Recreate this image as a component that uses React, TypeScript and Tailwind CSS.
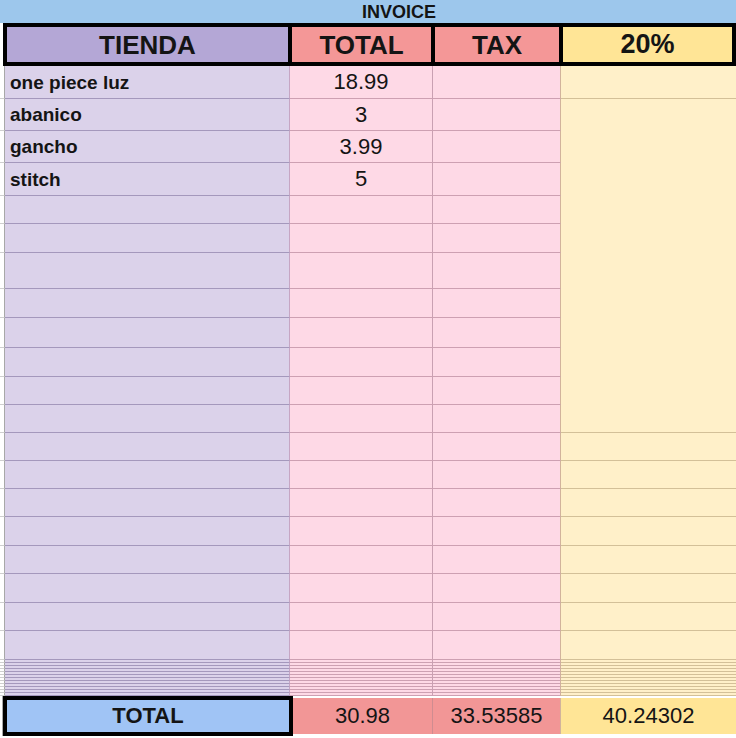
const rowHeights = [33, 32, 32, 33, 28, 29, 36, 29, 30, 29, 28, 28, 28, 28, 28, 29, 28, 29, 28, 29];

const items = [
  { name: 'one piece luz', total: '18.99' },
  { name: 'abanico', total: '3' },
  { name: 'gancho', total: '3.99' },
  { name: 'stitch', total: '5' },
];

const thinRows = Array.from({ length: 12 }, (_, i) => i);

export default function App() {
  return (
    <div className="w-[736px] h-[738px] overflow-hidden bg-white font-['Liberation_Sans',Arial,sans-serif] text-[#141414]">
      {/* title */}
      <div className="h-[23px] bg-[#9dc7ec] flex items-center pl-[362px] text-[18px] font-bold leading-none">
        INVOICE
      </div>

      {/* header */}
      <div className="ml-[3px] h-[43px] bg-black p-[4px] flex gap-[4px]">
        <div className="w-[281px] bg-[#b4a7d6] flex items-center justify-center text-[26px] font-bold leading-none">
          TIENDA
        </div>
        <div className="w-[139px] bg-[#f49797] flex items-center justify-center text-[26px] font-bold leading-none">
          TOTAL
        </div>
        <div className="w-[124px] bg-[#f49797] flex items-center justify-center text-[26px] font-bold leading-none">
          TAX
        </div>
        <div className="flex-1 bg-[#ffe596] flex items-center justify-center text-[27px] font-bold leading-none">
          20%
        </div>
      </div>

      {/* body rows */}
      <div className="grid grid-cols-[5px_285px_143px_128px_175px] grid-rows-[33px_32px_32px_33px_28px_29px_36px_29px_30px_29px_28px_28px_28px_28px_28px_29px_28px_29px_28px_29px]">
        {rowHeights.map((_, i) => {
          const item = items[i];
          return [
            <div key={`g${i}`} className="bg-white border-r border-b border-[#cfcfcf] border-r-[#a8a8a8]" />,
            <div
              key={`n${i}`}
              className="bg-[#dbd2ea] border-b border-r border-[#a498bc] border-r-[#c6a6c4] pl-[5px] flex items-center text-[19px] font-bold leading-none"
            >
              {item?.name}
            </div>,
            <div
              key={`t${i}`}
              className="bg-[#fed9e6] border-b border-r border-[#cda0b2] border-r-[#c9a0b2] flex items-center justify-center text-[22px] leading-none"
            >
              {item?.total}
            </div>,
            <div key={`x${i}`} className="bg-[#fed9e6] border-b border-r border-[#cda0b2] border-r-[#d2b39c]" />,
            i === 1 ? (
              <div key={`y${i}`} className="row-span-11 bg-[#fff0c9] border-b border-[#d3c098]" />
            ) : i > 1 && i < 12 ? null : (
              <div key={`y${i}`} className="bg-[#fff0c9] border-b border-[#d3c098]" />
            ),
          ];
        })}
      </div>

      {/* squashed rows */}
      <div>
        {thinRows.map((i) => (
          <div key={i} className="h-[3px] grid grid-cols-[5px_285px_143px_128px_175px]">
            <div className="bg-white border-r border-b border-[#cfcfcf] border-r-[#a8a8a8]" />
            <div className="bg-[#dbd2ea] border-b border-r border-[#a498bc] border-r-[#c6a6c4]" />
            <div className="bg-[#fed9e6] border-b border-r border-[#cda0b2] border-r-[#c9a0b2]" />
            <div className="bg-[#fed9e6] border-b border-r border-[#cda0b2] border-r-[#d2b39c]" />
            <div className="bg-[#fff0c9] border-b border-[#d3c098]" />
          </div>
        ))}
      </div>

      {/* totals */}
      <div className="h-[40px] flex">
        <div className="w-[3px] border-r border-[#a8a8a8]" />
        <div className="w-[290px] border-4 border-black bg-[#a0c4f5] flex items-center justify-center text-[22px] font-bold leading-none">
          TOTAL
        </div>
        <div className="w-[140px] my-[2px] bg-[#f29696] border-r border-[#cf8c90] flex items-center justify-center text-[22px] leading-none">
          30.98
        </div>
        <div className="w-[128px] my-[2px] bg-[#f29696] border-r border-[#d2b39c] flex items-center justify-center text-[22px] leading-none">
          33.53585
        </div>
        <div className="flex-1 my-[2px] bg-[#ffe596] flex items-center justify-center text-[22px] leading-none">
          40.24302
        </div>
      </div>
    </div>
  );
}
